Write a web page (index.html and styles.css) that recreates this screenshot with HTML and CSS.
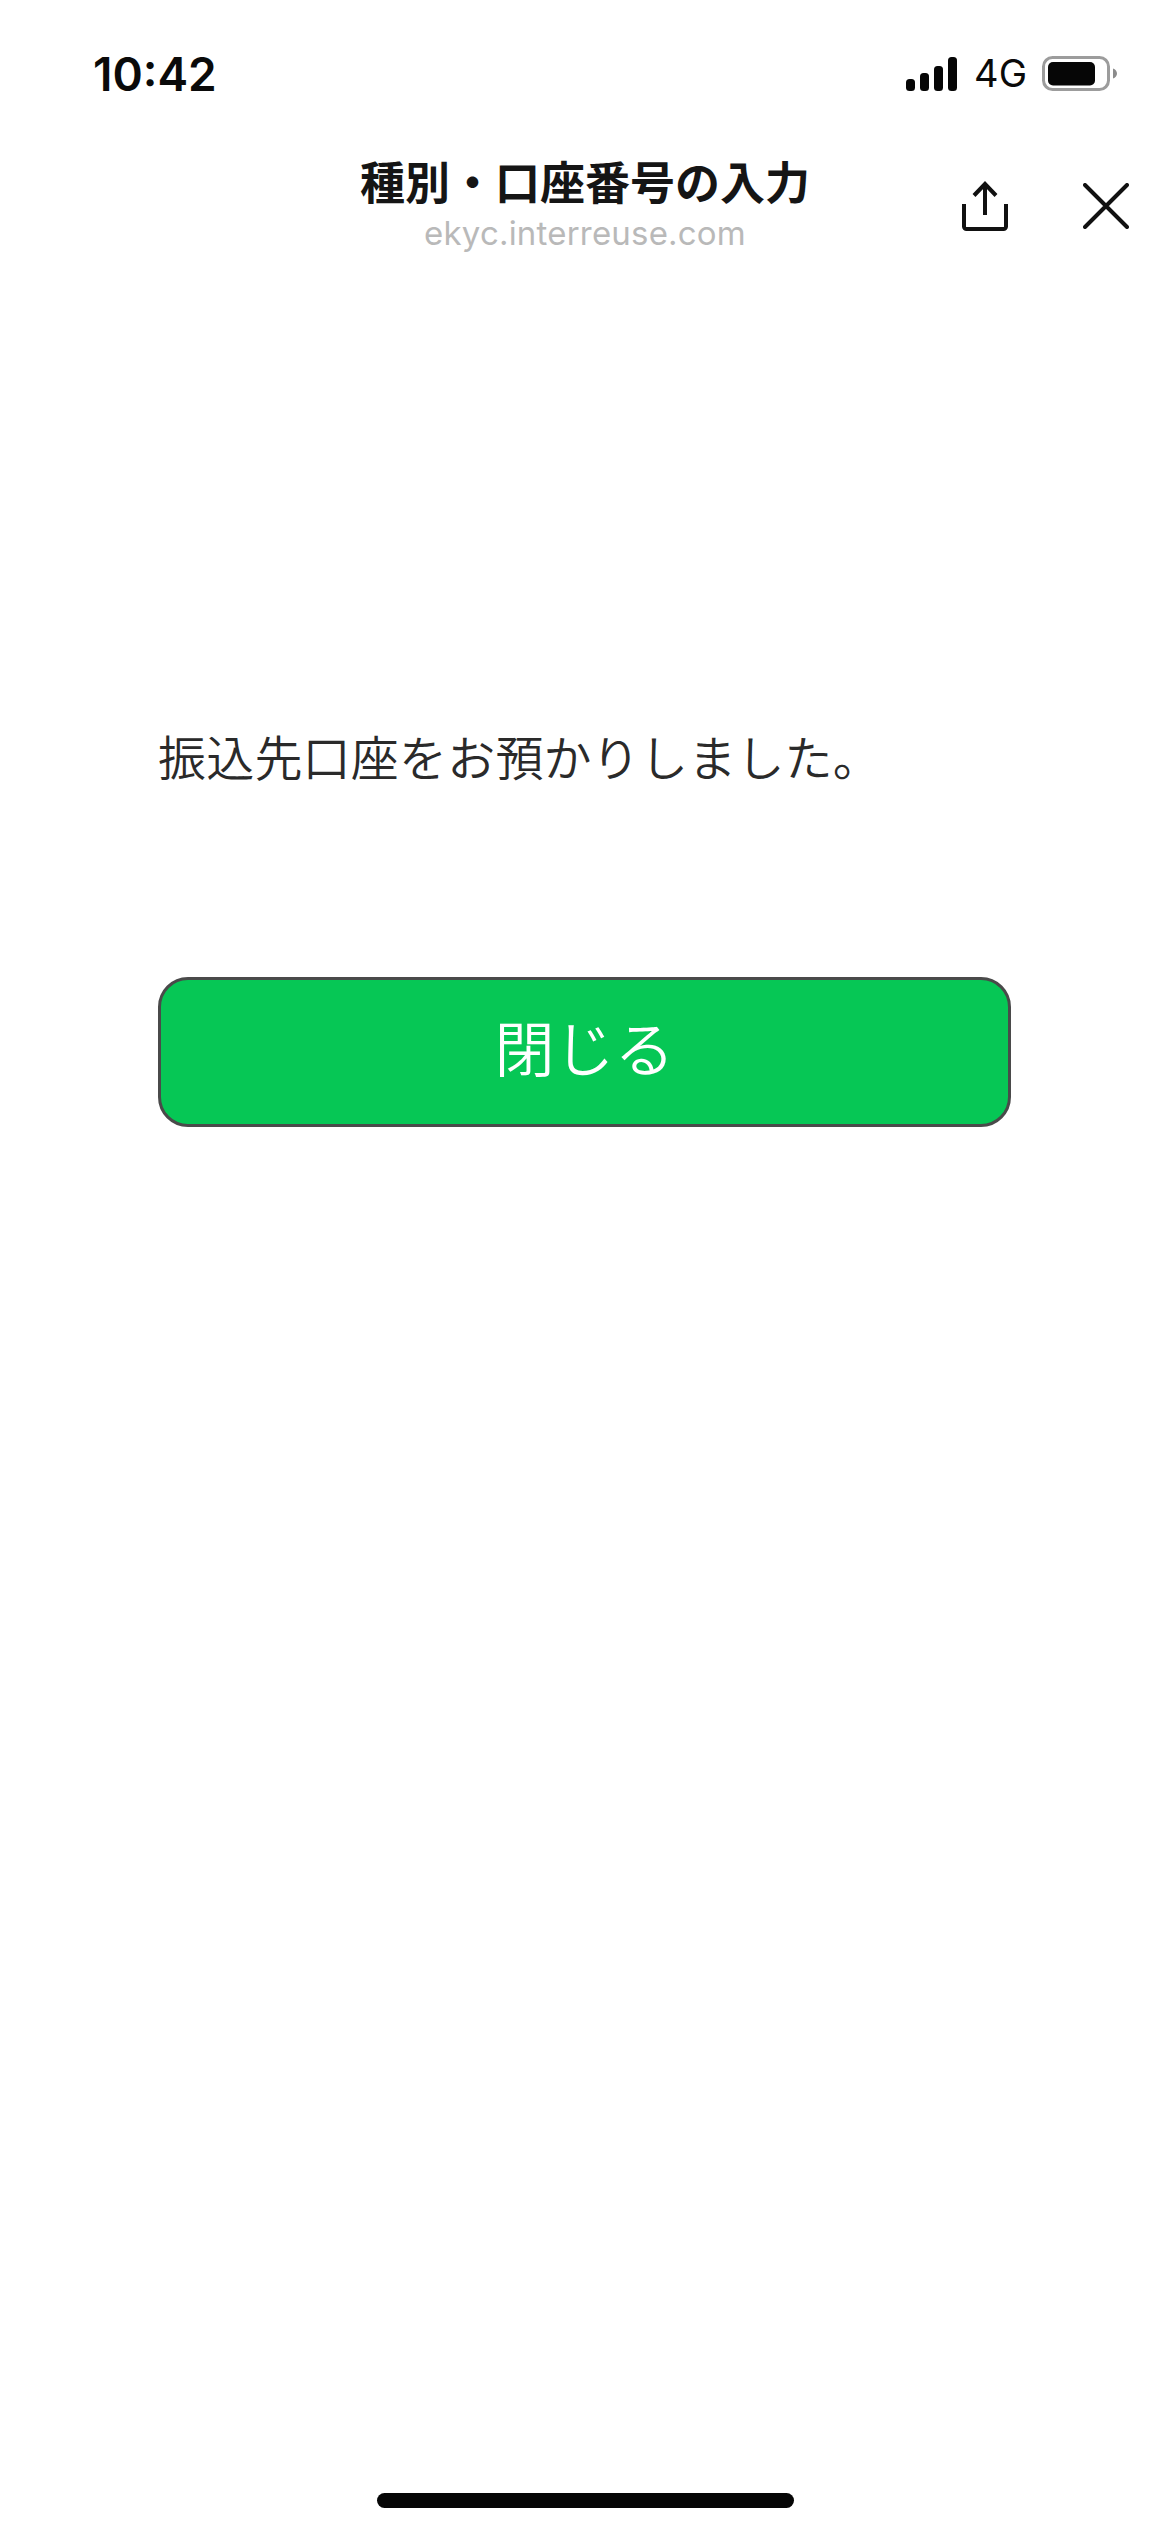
FILE: index.html
```html
<!DOCTYPE html>
<html lang="ja">
<head>
<meta charset="utf-8">
<title>種別・口座番号の入力</title>
<link rel="stylesheet" href="styles.css">
</head>
<body>
<div class="screen">
  <div class="status">
    <span class="time">10:42</span>
    <div class="status-right">
      <svg class="signal" width="51" height="34" viewBox="0 0 51 34"><rect x="0" y="22" width="9" height="12" rx="3.5"/><rect x="14" y="16" width="9" height="18" rx="3.5"/><rect x="28" y="9" width="9" height="25" rx="3.5"/><rect x="42" y="0" width="9" height="34" rx="3.5"/></svg>
      <span class="net">4G</span>
      <svg class="battery" width="75" height="35" viewBox="0 0 75 35"><rect x="1.5" y="1.5" width="65" height="32" rx="9" fill="none" stroke="#9c9c9c" stroke-width="3"/><rect x="6" y="6" width="47" height="23.500" rx="5" fill="#060606"/><path d="M71 12.500c2.500 .8 4 2.800 4 5s-1.500 4.200-4 5z" fill="#8c8c8c"/></svg>
    </div>
  </div>
  <header class="nav">
    <div class="nav-titles">
      <h1 class="title">種別・口座番号の入力</h1>
      <p class="domain">ekyc.interreuse.com</p>
    </div>
    <div class="nav-actions">
      <svg width="48" height="50" viewBox="0 0 48 50" fill="none" stroke="#111" stroke-width="4"><path d="M24 34V3M13 14.500 24 3l11 11.500"/><path d="M3 23v22.500a2.500 2.500 0 0 0 2.500 2.500h37a2.500 2.500 0 0 0 2.500-2.500V23"/></svg>
      <svg width="46" height="46" viewBox="0 0 46 46" fill="none" stroke="#111" stroke-width="4" stroke-linecap="round"><path d="M2 2 44 44M44 2 2 44"/></svg>
    </div>
  </header>
  <main class="content">
    <p class="message">振込先口座をお預かりしました。</p>
    <button class="close" type="button">閉じる</button>
  </main>
  <div class="home-wrap"><div class="home"></div></div>
</div>
</body>
</html>
```
FILE: styles.css
```css
* { box-sizing: border-box; }
html, body { margin: 0; padding: 0; background: #fff; }
.screen {
  width: 1170px;
  height: 2532px;
  display: flex;
  flex-direction: column;
  font-family: "Noto Sans CJK JP", "Noto Sans", sans-serif;
  color: #222;
}
.status {
  height: 130px;
  padding: 56px 53px 0 93px;
  display: flex;
  justify-content: space-between;
  align-items: flex-start;
}
.time {
  font-family: Inter, sans-serif;
  font-weight: 600;
  font-size: 46px;
  line-height: 37px;
  color: #0a0a0a;
}
.status-right { display: flex; align-items: center; height: 35px; }
.signal { fill: #060606; margin: 1px 17px 0 0; }
.net {
  font-family: Inter, sans-serif;
  font-size: 38px;
  line-height: 35px;
  color: #0a0a0a;
  margin-right: 15px;
}
.nav {
  height: 130px;
  position: relative;
  display: flex;
  justify-content: center;
}
.nav-titles { text-align: center; width: 600px; padding-top: 21px; }
.title {
  margin: 0;
  font-size: 45px;
  font-weight: 700;
  line-height: 60px;
  color: #151515;
}
.domain {
  margin: 2px 0 0;
  font-family: Inter, "Noto Sans", sans-serif;
  font-size: 33px;
  line-height: 40px;
  letter-spacing: 0.2px;
  color: #b9b9b9;
}
.nav-actions {
  position: absolute;
  left: 961px;
  top: 51px;
  display: flex;
  align-items: center;
  gap: 74px;
}
.content {
  flex: 1;
  padding: 460px 159px 0 158px;
}
.message {
  margin: 0;
  font-size: 48px;
  font-weight: 350;
  line-height: 70px;
  letter-spacing: 0.2px;
  color: #2a2a2a;
}
.close {
  display: block;
  margin-top: 187px;
  width: 853px;
  height: 150px;
  background: #06c755;
  border: 3px solid #4a4a4a;
  border-radius: 30px;
  color: #fff;
  font-family: inherit;
  font-size: 60px;
  font-weight: 350;
  padding: 0 0 13px;
}
.home-wrap {
  height: 39px;
  display: flex;
  justify-content: center;
}
.home {
  width: 417px;
  height: 15px;
  border-radius: 8px;
  background: #060606;
}
```
